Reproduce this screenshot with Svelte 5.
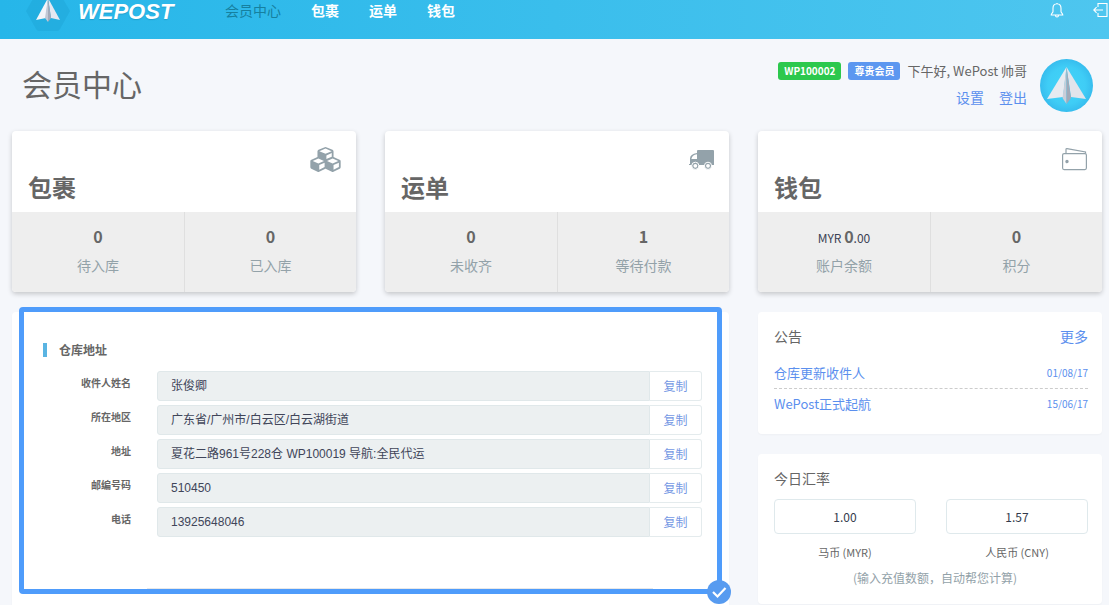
<script>
  const menu = ['包裹', '运单', '钱包'];

  const address = [
    { id: 'name', label: '收件人姓名', value: '张俊卿' },
    { id: 'region', label: '所在地区', value: '广东省/广州市/白云区/白云湖街道' },
    { id: 'street', label: '地址', value: '夏花二路961号228仓 WP100019 导航:全民代运' },
    { id: 'zip', label: '邮编号码', value: '510450' },
    { id: 'phone', label: '电话', value: '13925648046' }
  ];

  const news = [
    { title: '仓库更新收件人', date: '01/08/17' },
    { title: 'WePost正式起航', date: '15/06/17' }
  ];

  let myr = $state('1.00');
  let cny = $state('1.57');

  function copy(text) {
    navigator.clipboard?.writeText(text);
  }
</script>

{#snippet stat(value, label)}
  <div class="stat">
    <strong>{value}</strong>
    <span>{label}</span>
  </div>
{/snippet}

<header>
  <a class="brand" href="#home">
    <svg width="44" height="32" viewBox="0 0 44 32" aria-hidden="true">
      <path d="M11-8h22l11 19-10 18q-1 2-3 2H13q-2 0-3-2L0 11z" fill="#1fa9da" opacity=".6" />
      <path d="M22-2 10 20l10-2z" fill="#f3f5fa" />
      <path d="m22-2 12 22-9-2z" fill="#e4e8f1" />
      <path d="m22-2-3 20 3 4z" fill="#c3c9d6" />
      <path d="m22-2 3 20-3 4z" fill="#a4abba" />
    </svg>
    <span>WEPOST</span>
  </a>
  <nav>
    <a class="active" href="#center">会员中心</a>
    {#each menu as item}
      <a href="#{item}">{item}</a>
    {/each}
  </nav>
  <div class="tools">
    <button aria-label="通知">
      <svg width="16" height="16" viewBox="0 0 16 16" fill="none" stroke="#fff" stroke-width="1.1">
        <path d="M7 1.8h2M8 1.8C5 1.8 4 4 4 6.2v3.3c0 1.4-1.8 2-1.8 3.5h11.6c0-1.5-1.8-2.100-1.800-3.500V6.200C12 4 11 1.800 8 1.800zM6.500 13.200c0 2.300 3 2.300 3 0" />
      </svg>
    </button>
    <button aria-label="退出">
      <svg width="16" height="16" viewBox="0 0 16 16" fill="none" stroke="#fff" stroke-width="1.1">
        <path d="M5 5V1.500h9v13H5V11M10 8H.8M3.600 5.200.8 8l2.800 2.800" />
      </svg>
    </button>
  </div>
</header>

<main>
  <section class="intro">
    <h1>会员中心</h1>
    <div class="account">
      <div class="greeting">
        <span class="badge green">WP100002</span>
        <span class="badge blue">尊贵会员</span>
        <span>下午好, WePost 帅哥</span>
      </div>
      <div class="links">
        <a href="#settings">设置</a>
        <a href="#logout">登出</a>
      </div>
    </div>
    <svg class="avatar" width="53" height="53" viewBox="0 0 53 53" aria-hidden="true">
      <defs>
        <radialGradient id="sky">
          <stop offset="0" stop-color="#42d3f8" />
          <stop offset=".7" stop-color="#3fcdf6" />
          <stop offset="1" stop-color="#37bdee" />
        </radialGradient>
      </defs>
      <circle cx="26.500" cy="26.500" r="26.500" fill="url(#sky)" />
      <path d="M26.500 8 7 40l16-2z" fill="#e7eaf0" />
      <path d="M26.500 8 46 40l-15-2z" fill="#e1e4eb" />
      <path d="m26.500 8-4 31 4 6z" fill="#c9ced9" />
      <path d="m26.500 8 4.500 31-4.500 6z" fill="#a2a9b8" />
    </svg>
  </section>

  <div class="columns">
    <section class="card summary">
      <div class="top">
        <svg width="31" height="25" viewBox="0 0 2176 1792" fill="#93a2aa" fill-rule="evenodd" aria-hidden="true">
          <path d="M640 1632l384-192v-314l-384 164v342zM576 1178l404-173-404-173-404 173zM1664 1632l384-192v-314l-384 164v342zM1600 1178l404-173-404-173-404 173zM1152 869l384-165v-266l-384 164v267zM1088 490l441-189-441-189-441 189zM2176 1024v416q0 36-19 67t-52 47l-448 224q-25 14-57 14t-57-14l-448-224q-5-2-7-4-2 2-7 4l-448 224q-25 14-57 14t-57-14L71 1554q-33-16-52-47T0 1440v-416q0-38 21.500-70T78 906l434-186V320q0-38 21.500-70t56.500-48l448-192q23-10 50-10t50 10l448 192q35 16 56.500 48t21.500 70v400l434 186q36 16 57 48t21 70z" />
        </svg>
        <h2>包裹</h2>
      </div>
      <div class="stats">
        {@render stat('0', '待入库')}
        {@render stat('0', '已入库')}
      </div>
    </section>

    <section class="card summary">
      <div class="top">
        <svg width="25" height="25" viewBox="0 0 25 25" aria-hidden="true">
          <path d="M9 3h15q1 0 1 1v14H0v-1h1v-5.500Q1 7 8 6V4q0-1 1-1z" fill="#93a2aa" />
          <path d="M8 7.300Q3 8 2.400 12H8z" fill="#fff" />
          <circle cx="6.300" cy="18.800" r="3.600" fill="#93a2aa" stroke="#fff" />
          <circle cx="19" cy="18.800" r="3.600" fill="#93a2aa" stroke="#fff" />
          <circle cx="6.300" cy="18.800" r="1.900" fill="#fff" />
          <circle cx="19" cy="18.800" r="1.900" fill="#fff" />
        </svg>
        <h2>运单</h2>
      </div>
      <div class="stats">
        {@render stat('0', '未收齐')}
        {@render stat('1', '等待付款')}
      </div>
    </section>

    <section class="card summary">
      <div class="top">
        <svg width="25" height="25" viewBox="0 0 25 25" fill="none" stroke="#93a2aa" stroke-width="1.200" aria-hidden="true">
          <rect x=".6" y="6.600" width="23.800" height="16" rx="1.500" />
          <path d="M4 6.600V2.500q0-1 1-.9L23.500 5v1.600" />
          <circle cx="5" cy="14.500" r="1.100" fill="#93a2aa" />
        </svg>
        <h2>钱包</h2>
      </div>
      <div class="stats">
        <div class="stat">
          <div class="money">MYR <strong>0</strong>.00</div>
          <span>账户余额</span>
        </div>
        {@render stat('0', '积分')}
      </div>
    </section>

    <section class="card warehouse">
      <h3>仓库地址</h3>
      <div class="fields">
        {#each address as row}
          <div class="field">
            <label for={row.id}>{row.label}</label>
            <input id={row.id} readonly value={row.value} />
            <button onclick={() => copy(row.value)}>复制</button>
          </div>
        {/each}
      </div>
      <hr />
      <div class="selected">
        <svg width="24" height="24" viewBox="0 0 24 24" aria-hidden="true">
          <circle cx="12" cy="12" r="12" fill="#579bf0" />
          <path d="m6 12 4.500 4.500L18.500 8" fill="none" stroke="#fff" stroke-width="2.200" />
        </svg>
      </div>
    </section>

    <aside>
      <section class="card panel">
        <div class="heading">
          <h4>公告</h4>
          <a href="#news">更多</a>
        </div>
        <ul>
          {#each news as item}
            <li><a href="#news">{item.title}<time>{item.date}</time></a></li>
          {/each}
        </ul>
      </section>

      <section class="card panel rates">
        <h4>今日汇率</h4>
        <div class="pair">
          <div>
            <input id="myr" bind:value={myr} />
            <label for="myr">马币 (MYR)</label>
          </div>
          <div>
            <input id="cny" bind:value={cny} />
            <label for="cny">人民币 (CNY)</label>
          </div>
        </div>
        <p>(输入充值数额，自动帮您计算)</p>
      </section>
    </aside>
  </div>
</main>

<style>
  :global(body) {
    background: #f5f7fb;
    color: #666;
    font: 14px/20px 'Noto Sans CJK SC', sans-serif;
  }

  :global(#app) {
    display: flex;
    flex-direction: column;
    min-height: 100vh;
  }

  * {
    box-sizing: border-box;
  }

  h1, h2, h3, h4, ul, p {
    margin: 0;
    padding: 0;
  }

  a {
    color: #5b8fee;
    text-decoration: none;
  }

  button, input {
    font: inherit;
  }

  button {
    padding: 0;
    border: 0;
    background: none;
    cursor: pointer;
  }

  svg {
    display: block;
  }

  header {
    display: flex;
    align-items: flex-start;
    height: 39px;
    padding-left: 26px;
    background: linear-gradient(90deg, #26b6e9, #4ec6ef);
  }

  .brand {
    display: flex;
    gap: 8px;
    width: 199px;
    color: #fff;
    font: italic bold 22px/24px 'Liberation Sans', sans-serif;
    text-shadow: 0 1px 1px #0a7ca666;
  }

  nav {
    display: flex;
    gap: 30px;
  }

  nav a {
    color: #fff;
    font-weight: 700;
    line-height: 20px;
  }

  nav .active {
    color: #16809f;
    font-weight: 400;
  }

  .tools {
    display: flex;
    gap: 28px;
    margin-left: auto;
    padding-top: 2px;
  }

  main {
    display: flex;
    flex: 1;
    flex-direction: column;
    padding: 0 7px 0 12px;
  }

  .intro {
    display: flex;
    align-items: center;
    height: 92px;
    padding: 0 9px 0 10px;
  }

  h1 {
    margin-right: auto;
    padding-bottom: 4px;
    font-size: 30px;
    font-weight: 400;
    line-height: 40px;
  }

  .account {
    display: flex;
    flex-direction: column;
    gap: 6px;
    margin-right: 13px;
    padding-bottom: 2px;
  }

  .greeting {
    display: flex;
    align-items: center;
    gap: 7px;
    font-size: 13px;
  }

  .badge {
    padding: 0 6px;
    border-radius: 3px;
    color: #fff;
    font-size: 10px;
    font-weight: 700;
    line-height: 18px;
  }

  .green {
    background: #2cc84d;
  }

  .blue {
    background: #5c97f0;
  }

  .links {
    display: flex;
    justify-content: flex-end;
    gap: 15px;
  }

  .columns {
    display: grid;
    flex: 1;
    grid-template-columns: repeat(3, 1fr);
    grid-template-rows: auto 1fr;
    gap: 20px 29px;
  }

  .card {
    border-radius: 4px;
    background: #fff;
    box-shadow: 0 1px 2px #00000008;
  }

  .summary {
    overflow: hidden;
    box-shadow: 0 2px 5px #00000033;
  }

  .top {
    display: flex;
    flex-direction: column;
    height: 81px;
    padding: 16px 16px 0;
  }

  .top svg {
    align-self: flex-end;
    margin-right: -1px;
  }

  h2 {
    font-size: 24px;
    font-weight: 700;
    line-height: 30px;
  }

  .stats {
    display: grid;
    grid-template-columns: 1fr 1fr;
    background: #eee;
  }

  .stat {
    display: flex;
    flex-direction: column;
    align-items: center;
    gap: 5px;
    height: 80px;
    padding-top: 12px;
    color: #93a2a9;
    line-height: 24px;
  }

  .stat + .stat {
    border-left: 1px solid #dfdfdf;
  }

  .stat strong {
    color: #666;
    font-size: 16px;
  }

  .money {
    height: 24px;
    color: #3b4254;
    font-size: 12px;
  }

  .warehouse {
    position: relative;
    grid-column: span 2;
    padding: 31px 27px 0 31px;
    border-radius: 4px 4px 0 0;
  }

  h3 {
    margin-bottom: 14px;
    padding-left: 12px;
    border-left: 4px solid #5ab4e2;
    font-size: 12px;
    font-weight: 700;
    line-height: 14px;
  }

  .fields {
    display: grid;
    gap: 4px;
  }

  .field {
    display: grid;
    grid-template-columns: 88px 1fr 52px;
    height: 30px;
    font-size: 12px;
  }

  .field label {
    margin: 0;
    font-size: 10px;
    font-weight: 700;
    line-height: 24px;
    text-align: right;
  }

  .field input {
    width: auto;
    min-width: 0;
    margin-left: 26px;
    padding: 0 13px;
    border: 1px solid #e0e8ea;
    border-radius: 3px 0 0 3px;
    outline: 0;
    background: #ecf0f1;
    color: #404559;
    font-family: 'Liberation Sans', 'Noto Sans CJK SC', sans-serif;
  }

  .field button {
    border: 1px solid #e4ebed;
    border-left: 0;
    border-radius: 0 3px 3px 0;
    color: #7598e4;
  }

  hr {
    margin: 51px 49px 0 104px;
    border: 0;
    border-top: 1px solid #e8e8e8;
  }

  .selected {
    position: absolute;
    inset: -5px 7px 11px 7px;
    border: 5px solid #4f9cfb;
    border-radius: 4px;
    pointer-events: none;
  }

  .selected svg {
    position: absolute;
    right: -14px;
    bottom: -15px;
  }

  aside {
    display: flex;
    flex-direction: column;
    gap: 20px;
  }

  .panel {
    padding: 14px 14px 0 16px;
  }

  .panel:first-child {
    height: 122px;
  }

  .heading {
    display: flex;
    justify-content: space-between;
    margin-bottom: 12px;
  }

  h4 {
    font-size: 14px;
    font-weight: 400;
  }

  ul {
    list-style: none;
  }

  li {
    font-size: 13px;
    line-height: 30px;
  }

  li + li {
    border-top: 1px dashed #ccc;
  }

  li a {
    display: flex;
    justify-content: space-between;
  }

  time {
    font-size: 10px;
  }

  .rates {
    margin-bottom: 1px;
    padding-bottom: 16px;
    font-size: 12px;
    text-align: center;
  }

  .rates h4 {
    margin-bottom: 11px;
    text-align: left;
  }

  .pair {
    display: grid;
    grid-template-columns: 1fr 1fr;
    gap: 30px;
  }

  .pair input {
    display: block;
    width: 100%;
    height: 35px;
    border: 1px solid #dfe9ec;
    border-radius: 4px;
    color: #333b4c;
    text-align: center;
  }

  .pair label {
    display: block;
    margin-top: 8px;
    font-size: 11px;
  }

  .rates p {
    margin-top: 6px;
    padding-left: 8px;
    color: #93a2a9;
  }
</style>
